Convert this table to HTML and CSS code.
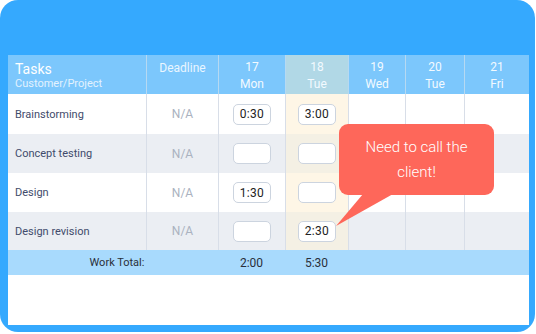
FILE: index.html
```html
<!DOCTYPE html>
<html>
<head>
<meta charset="utf-8">
<link rel="stylesheet" href="styles.css">
</head>
<body>
<div class="frame">
  <div class="panel">
    <div class="grid">
      <div class="hcell tasks"><span class="t1">Tasks</span><span class="t2">Customer/Project</span></div>
      <div class="hcell deadline">Deadline</div>
      <div class="hcell day"><span>17</span><span>Mon</span></div>
      <div class="hcell day hl"><span>18</span><span>Tue</span></div>
      <div class="hcell day"><span>19</span><span>Wed</span></div>
      <div class="hcell day"><span>20</span><span>Tue</span></div>
      <div class="hcell day"><span>21</span><span>Fri</span></div>

      <div class="cell name">Brainstorming</div>
      <div class="cell na">N/A</div>
      <div class="cell"><span class="inp">0:30</span></div>
      <div class="cell hl"><span class="inp">3:00</span></div>
      <div class="cell"></div>
      <div class="cell"></div>
      <div class="cell"></div>

      <div class="cell name alt">Concept testing</div>
      <div class="cell na alt">N/A</div>
      <div class="cell alt"><span class="inp"></span></div>
      <div class="cell alt hl"><span class="inp"></span></div>
      <div class="cell alt"></div>
      <div class="cell alt"></div>
      <div class="cell alt"></div>

      <div class="cell name">Design</div>
      <div class="cell na">N/A</div>
      <div class="cell"><span class="inp">1:30</span></div>
      <div class="cell hl"><span class="inp"></span></div>
      <div class="cell"></div>
      <div class="cell"></div>
      <div class="cell"></div>

      <div class="cell name alt">Design revision</div>
      <div class="cell na alt">N/A</div>
      <div class="cell alt"><span class="inp"></span></div>
      <div class="cell alt hl"><span class="inp">2:30</span></div>
      <div class="cell alt"></div>
      <div class="cell alt"></div>
      <div class="cell alt"></div>

      <div class="tcell tlabel">Work Total:</div>
      <div class="tcell">2:00</div>
      <div class="tcell">5:30</div>
      <div class="tcell"></div>
      <div class="tcell"></div>
      <div class="tcell"></div>
    </div>
    <div class="tooltip">
      <p>Need to call the<br>client!</p>
      <svg class="tail" width="60" height="36" viewBox="0 0 60 36"><polygon points="27,0 57,0 0,32" fill="#fe675a"/></svg>
    </div>
  </div>
</div>
</body>
</html>
```

FILE: styles.css
```css
* { box-sizing: border-box; }
html, body { margin: 0; padding: 0; background: #fff; }
body { font-family: Roboto, "Noto Sans", sans-serif; }

.frame {
  width: 535px;
  height: 332px;
  background: #35a9fe;
  border-radius: 18px;
  padding: 55px 6px 7px 8px;
}

.panel {
  position: relative;
  width: 521px;
  height: 270px;
  background: #fff;
}

.grid {
  display: grid;
  grid-template-columns: 138px 72px 67px 63px 57px 59px 65px;
  grid-template-rows: 39px 40px 39px 39px 38px 25px;
}

.hcell {
  background: #7cc7fc;
  color: #fff;
  border-left: 1px solid #b6d9f2;
  display: flex;
  flex-direction: column;
  align-items: center;
  font-size: 12px;
}
.hcell.tasks { border-left: none; align-items: flex-start; padding: 6px 0 0 7px; }
.t1 { font-size: 14px; line-height: 16px; }
.t2 { font-size: 11px; line-height: 13px; color: #e3f2fe; }
.hcell.deadline { padding-top: 6px; line-height: 14px; color: #eaf6ff; }
.hcell.day { padding-top: 4px; line-height: 17px; color: #f3faff; }
.hcell.hl { background: #b1d8e6; }

.cell {
  background: #fff;
  border-left: 1px solid #d8dee8;
  display: flex;
  align-items: center;
  justify-content: center;
  font-size: 12px;
}
.cell.alt { background: #ebeef3; }
.cell.hl { background: #fef6e6; }
.cell.alt.hl { background: #f4f0e4; }
.cell.name { border-left: none; justify-content: flex-start; padding-left: 7px; color: #3f4b6b; font-size: 11px; }
.cell.na { color: #aab2c0; font-size: 12px; }

.inp {
  width: 38px;
  height: 21px;
  background: #fff;
  border: 1px solid #ccd4df;
  border-radius: 5px;
  display: flex;
  align-items: center;
  justify-content: center;
  font-size: 12px;
  color: #222;
  letter-spacing: 0.3px;
}

.tcell {
  background: #a8dafd;
  display: flex;
  align-items: center;
  justify-content: center;
  font-size: 12px;
  color: #2a2f3a;
}
.tlabel { grid-column: span 2; font-size: 11px; padding-left: 8px; }

.tooltip {
  position: absolute;
  left: 331px;
  top: 69px;
  width: 155px;
  height: 71px;
  background: #fe675a;
  border-radius: 9px;
  display: flex;
  align-items: center;
  justify-content: center;
}
.tooltip p {
  margin: 0;
  color: #fff;
  font-size: 15px;
  font-weight: 300;
  line-height: 25px;
  text-align: center;
}
.tail {
  position: absolute;
  left: -3px;
  top: 70px;
}
```
